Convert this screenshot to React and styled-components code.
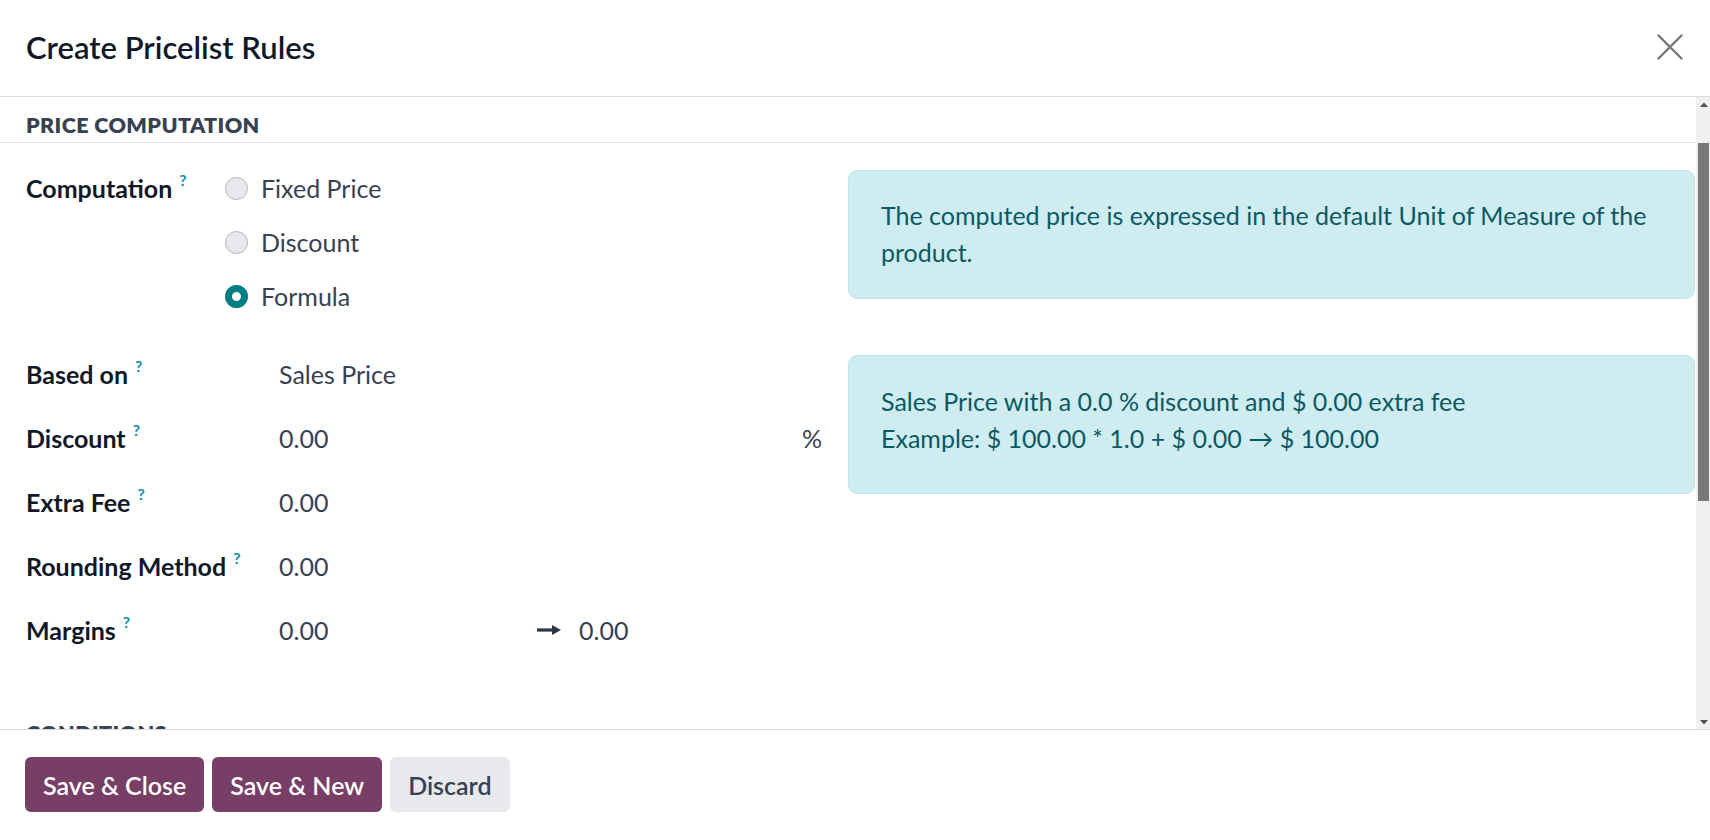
import React from "react";
import styled, { createGlobalStyle } from "styled-components";

const GlobalStyle = createGlobalStyle`
  html, body {
    margin: 0;
    padding: 0;
    background: #ffffff;
  }
  body {
    font-family: Lato, "Open Sans", sans-serif;
    color: #111827;
  }
  * {
    box-sizing: border-box;
  }
`;

//Data

const radios = [
  { id: "fixed", label: "Fixed Price" },
  { id: "discount", label: "Discount" },
  { id: "formula", label: "Formula" },
];

//Function

export default function App() {
  return (
    <>
      <GlobalStyle />
      <StyledModal>
        <StyledHeader>
          <StyledTitle>Create Pricelist Rules</StyledTitle>
          <StyledClose aria-label="Close">
            <svg width="26" height="26" viewBox="0 0 26 26">
              <path
                d="M1.5 1.5 L24.5 24.5 M24.5 1.5 L1.5 24.5"
                stroke="#767676"
                strokeWidth="2.4"
                strokeLinecap="round"
              />
            </svg>
          </StyledClose>
        </StyledHeader>

        <StyledBody>
          <StyledScrollArea>
            <StyledSectionTitle>Price Computation</StyledSectionTitle>
            <StyledGrid>
              <StyledColumn $top={18} $left>
                <StyledRow $height={54} $labelWidth={199}>
                  <StyledLabel>
                    Computation<StyledHelp>?</StyledHelp>
                  </StyledLabel>
                </StyledRow>
                <StyledRadioList>
                  {radios.map((radio) => (
                    <StyledRadioRow key={radio.id}>
                      <StyledRadio $checked={radio.id === "formula"} />
                      <span>{radio.label}</span>
                    </StyledRadioRow>
                  ))}
                </StyledRadioList>

                <StyledFields>
                  <StyledRow $height={64} $labelWidth={253}>
                    <StyledLabel>
                      Based on<StyledHelp>?</StyledHelp>
                    </StyledLabel>
                    <StyledValue>Sales Price</StyledValue>
                  </StyledRow>
                  <StyledRow $height={64} $labelWidth={253}>
                    <StyledLabel>
                      Discount<StyledHelp>?</StyledHelp>
                    </StyledLabel>
                    <StyledValue $spread>
                      <span>0.00</span>
                      <span>%</span>
                    </StyledValue>
                  </StyledRow>
                  <StyledRow $height={64} $labelWidth={253}>
                    <StyledLabel>
                      Extra Fee<StyledHelp>?</StyledHelp>
                    </StyledLabel>
                    <StyledValue>0.00</StyledValue>
                  </StyledRow>
                  <StyledRow $height={64} $labelWidth={253}>
                    <StyledLabel>
                      Rounding Method<StyledHelp>?</StyledHelp>
                    </StyledLabel>
                    <StyledValue>0.00</StyledValue>
                  </StyledRow>
                  <StyledRow $height={64} $labelWidth={253}>
                    <StyledLabel>
                      Margins<StyledHelp>?</StyledHelp>
                    </StyledLabel>
                    <StyledValue>
                      <StyledMarginInput>0.00</StyledMarginInput>
                      <svg width="24" height="12" viewBox="0 0 24 12">
                        <path d="M0 6 H17" stroke="#2d3748" strokeWidth="3.2" />
                        <path d="M15 1 L24 6 L15 11 Z" fill="#2d3748" />
                      </svg>
                      <StyledMarginInput $second>0.00</StyledMarginInput>
                    </StyledValue>
                  </StyledRow>
                </StyledFields>
              </StyledColumn>

              <StyledColumn $top={27}>
                <StyledAlert>
                  The computed price is expressed in the default Unit of
                  Measure of the product.
                </StyledAlert>
                <StyledAlert $second>
                  Sales Price with a 0.0 % discount and $ 0.00 extra fee
                  <br />
                  Example: $ 100.00 * 1.0 + $ 0.00 → $ 100.00
                </StyledAlert>
              </StyledColumn>
            </StyledGrid>

            <StyledSectionTitle $plain>Conditions</StyledSectionTitle>
          </StyledScrollArea>

          <StyledScrollbar aria-hidden="true">
            <StyledScrollArrow>
              <svg width="8" height="5" viewBox="0 0 8 5">
                <path d="M0 5 L4 0.5 L8 5 Z" fill="#505050" />
              </svg>
            </StyledScrollArrow>
            <StyledScrollTrack>
              <StyledScrollThumb />
            </StyledScrollTrack>
            <StyledScrollArrow>
              <svg width="8" height="5" viewBox="0 0 8 5">
                <path d="M0 0 L4 4.5 L8 0 Z" fill="#505050" />
              </svg>
            </StyledScrollArrow>
          </StyledScrollbar>
        </StyledBody>

        <StyledFooter>
          <StyledButton $primary>Save &amp; Close</StyledButton>
          <StyledButton $primary>Save &amp; New</StyledButton>
          <StyledButton>Discard</StyledButton>
        </StyledFooter>
      </StyledModal>
    </>
  );
}

const StyledModal = styled.div`
  width: 100vw;
  height: 100vh;
  display: flex;
  flex-direction: column;
  background: #ffffff;
`;

const StyledHeader = styled.header`
  flex: 0 0 97px;
  display: flex;
  align-items: center;
  justify-content: space-between;
  padding: 0 27px 3px 26px;
  border-bottom: 1px solid #dcdde1;
`;

const StyledTitle = styled.h4`
  margin: 0;
  font-size: 31px;
  font-weight: 600;
  color: #111827;
`;

const StyledClose = styled.button`
  border: none;
  background: none;
  padding: 0;
  display: flex;
  cursor: pointer;
`;

const StyledBody = styled.div`
  flex: 1;
  min-height: 0;
  display: flex;
`;

const StyledScrollArea = styled.div`
  flex: 1;
  min-width: 0;
  overflow: hidden;
`;

const StyledScrollbar = styled.div`
  flex: 0 0 14px;
  display: flex;
  flex-direction: column;
  background: #f0f0f0;
`;

const StyledScrollArrow = styled.div`
  flex: 0 0 14px;
  display: flex;
  align-items: center;
  justify-content: center;
  padding-left: 1px;
`;

const StyledScrollTrack = styled.div`
  flex: 1;
  padding: 32px 1px 0 2px;
`;

const StyledScrollThumb = styled.div`
  height: 358px;
  background: #787878;
`;

const StyledSectionTitle = styled.div`
  height: 46px;
  padding: 15px 26px 0;
  font-size: 21.5px;
  font-weight: 800;
  letter-spacing: 0.4px;
  text-transform: uppercase;
  color: #374151;
  border-bottom: 1px solid #e3e4e8;
  margin-top: ${({ $plain }) => ($plain ? "43px" : "0")};
`;

const StyledGrid = styled.div`
  display: grid;
  grid-template-columns: 1fr 1fr;
`;

const StyledColumn = styled.div`
  display: flex;
  flex-direction: column;
  padding: ${({ $top, $left }) =>
    $left ? `${$top}px 26px 0 26px` : `${$top}px 1px 0 0`};
`;

const StyledRow = styled.div`
  display: grid;
  grid-template-columns: ${({ $labelWidth }) => $labelWidth}px 1fr;
  align-items: center;
  height: ${({ $height }) => $height}px;
  font-size: 25px;
`;

const StyledLabel = styled.div`
  font-weight: 700;
  color: #111827;
  white-space: nowrap;
`;

const StyledHelp = styled.sup`
  margin-left: 7px;
  font-size: 16px;
  font-weight: 700;
  color: #1689b0;
  position: relative;
  top: -3px;
`;

const StyledValue = styled.div`
  display: flex;
  align-items: center;
  justify-content: ${({ $spread }) => ($spread ? "space-between" : "flex-start")};
  color: #374151;
`;

const StyledMarginInput = styled.span`
  width: ${({ $second }) => ($second ? "auto" : "258px")};
  margin-left: ${({ $second }) => ($second ? "18px" : "0")};
`;

const StyledRadioList = styled.div`
  display: flex;
  flex-direction: column;
  margin-top: -54px;
  margin-left: 199px;
`;

const StyledRadioRow = styled.label`
  display: flex;
  align-items: center;
  gap: 13px;
  height: 54px;
  font-size: 25px;
  color: #374151;
`;

const StyledRadio = styled.span`
  flex: 0 0 23px;
  width: 23px;
  height: 23px;
  border-radius: 50%;
  background: ${({ $checked }) => ($checked ? "#ffffff" : "#e7e9ed")};
  border: ${({ $checked }) =>
    $checked ? "7px solid #017e84" : "1px solid #b3b7bd"};
`;

const StyledFields = styled.div`
  margin-top: 19px;
`;

const StyledAlert = styled.div`
  background: #cfecf1;
  border: 1px solid #bfe5ec;
  border-radius: 9px;
  color: #0b5a63;
  font-size: 25px;
  line-height: 37px;
  padding: ${({ $second }) => ($second ? "27px 32px 36px" : "26px 32px 27px")};
  margin-top: ${({ $second }) => ($second ? "56px" : "0")};
`;

const StyledFooter = styled.footer`
  flex: 0 0 111px;
  display: flex;
  align-items: flex-start;
  gap: 8px;
  padding: 27px 25px 0;
  border-top: 1px solid #dcdde1;
`;

const StyledButton = styled.button`
  height: 55px;
  padding: 0 18px;
  border: none;
  border-radius: 6px;
  font-family: Lato, "Open Sans", sans-serif;
  font-size: 25px;
  font-weight: 600;
  color: ${({ $primary }) => ($primary ? "#ffffff" : "#374151")};
  background: ${({ $primary }) => ($primary ? "#773e66" : "#e7e9ed")};
  cursor: pointer;
`;
